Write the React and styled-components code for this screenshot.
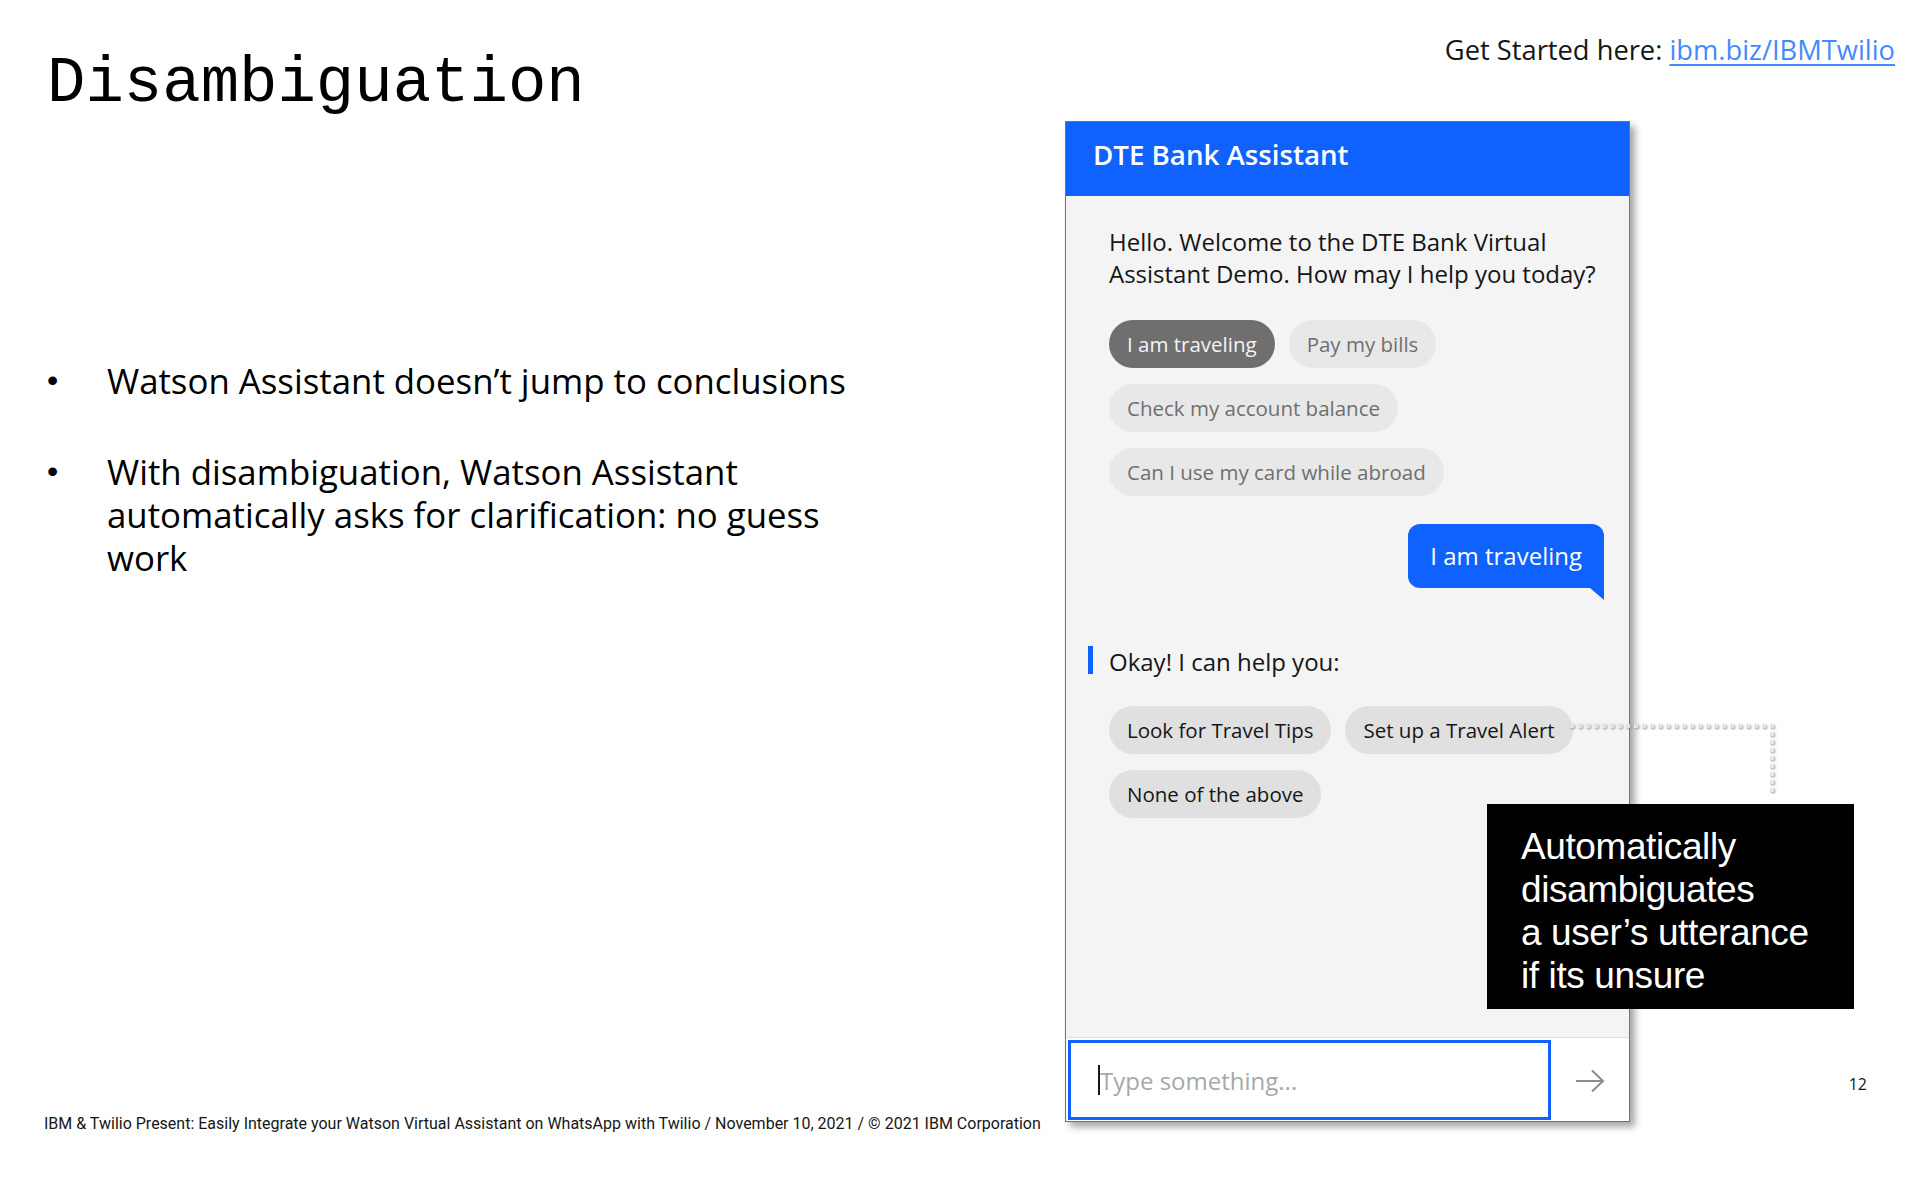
import React from 'react';
import styled, { createGlobalStyle } from 'styled-components';

const GlobalStyle = createGlobalStyle`
  html, body {
    margin: 0;
    padding: 0;
    background: #fff;
  }
  body {
    font-family: "Open Sans", "Noto Sans", sans-serif;
    color: #161616;
  }
`;

const Slide = styled.div`
  width: 1920px;
  height: 1200px;
  display: flex;
  overflow: hidden;
  background: #fff;
`;

const LeftColumn = styled.section`
  width: 1065px;
  flex: none;
  display: flex;
  flex-direction: column;
  box-sizing: border-box;
  padding: 52px 0 66px 0;
`;

const Title = styled.h1`
  margin: 0 0 0 47px;
  font-family: "Liberation Mono", "DejaVu Sans Mono", monospace;
  font-weight: 400;
  font-size: 64px;
  line-height: 64px;
  color: #000;
`;

const Bullets = styled.ul`
  list-style: none;
  margin: 243px 0 0 0;
  padding: 0 0 0 47px;
  display: flex;
  flex-direction: column;
  gap: 48px;
`;

const Bullet = styled.li`
  display: flex;
  font-size: 34.8px;
  line-height: 43px;
  color: #000;
  white-space: nowrap;
`;

const Dot = styled.span`
  width: 60px;
  flex: none;
  font-family: "Liberation Sans", Arial, sans-serif;
  font-size: 32px;
`;

const Footer = styled.footer`
  margin: auto 0 0 44px;
  font-family: Roboto, "Liberation Sans", sans-serif;
  font-size: 16px;
  line-height: 20px;
  color: #161616;
  white-space: nowrap;
`;

const RightColumn = styled.section`
  flex: 1;
  display: flex;
  flex-direction: column;
`;

const TopBar = styled.div`
  height: 121px;
  flex: none;
  box-sizing: border-box;
  padding: 32px 25px 0 0;
  text-align: right;
  font-size: 27.3px;
  line-height: 36px;
  color: #161616;
`;

const StartLink = styled.a`
  color: #4589ff;
  text-decoration: underline;
  text-underline-offset: 4px;
`;

const Stage = styled.div`
  flex: 1;
  position: relative;
  display: flex;
`;

const ChatPanel = styled.div`
  width: 565px;
  height: 1001px;
  flex: none;
  box-sizing: border-box;
  border: 1px solid #737373;
  box-shadow: 5px 5px 7px rgba(0, 0, 0, 0.35);
  background: #f4f4f4;
  display: flex;
  flex-direction: column;
`;

const PanelHeader = styled.div`
  height: 74px;
  flex: none;
  box-sizing: border-box;
  padding: 14px 27px 0;
  background: #0f62fe;
  color: #fff;
  font-size: 27.7px;
  font-weight: 600;
  line-height: 36px;
`;

const PanelBody = styled.div`
  flex: 1;
  min-height: 0;
  box-sizing: border-box;
  padding: 30px 25px 0 43px;
  display: flex;
  flex-direction: column;
  align-items: flex-start;
`;

const Message = styled.p`
  margin: 0;
  font-size: 24px;
  line-height: 32px;
  color: #161616;
`;

const ChipGroup = styled.div`
  margin-top: ${(p) => p.$top}px;
  display: flex;
  flex-direction: column;
  gap: 16px;
`;

const ChipRow = styled.div`
  display: flex;
  gap: 14px;
`;

const chipColors = {
  selected: { bg: '#6f6f6f', fg: '#f4f4f4' },
  disabled: { bg: '#e8e8e8', fg: '#6f6f6f' },
  active: { bg: '#e0e0e0', fg: '#161616' },
};

const Chip = styled.span`
  height: 48px;
  box-sizing: border-box;
  padding: 0 18px;
  border-radius: 24px;
  display: inline-flex;
  align-items: center;
  font-size: 20.5px;
  white-space: nowrap;
  background: ${(p) => chipColors[p.$variant].bg};
  color: ${(p) => chipColors[p.$variant].fg};
`;

const UserBubble = styled.div`
  align-self: flex-end;
  margin-top: 28px;
  position: relative;
  padding: 16px 22px;
  border-radius: 12px 12px 0 12px;
  background: #0f62fe;
  color: #fff;
  font-size: 24px;
  line-height: 32px;

  &::after {
    content: '';
    position: absolute;
    right: 0;
    top: 100%;
    border-left: 14px solid transparent;
    border-top: 12px solid #0f62fe;
  }
`;

const BotLine = styled.div`
  margin: 58px 0 0 -21px;
  display: flex;
  gap: 16px;
  font-size: 24px;
  line-height: 32px;
  color: #161616;
`;

const Accent = styled.span`
  width: 5px;
  height: 28px;
  flex: none;
  background: #0f62fe;
`;

const InputRow = styled.div`
  height: 84px;
  flex: none;
  box-sizing: border-box;
  border-top: 1px solid #e0e0e0;
  padding: 2px 0 0 2px;
  display: flex;
  background: #fff;
`;

const InputBox = styled.div`
  width: 483px;
  height: 80px;
  box-sizing: border-box;
  border: 3px solid #0f62fe;
  padding-left: 27px;
  display: flex;
  align-items: center;
  background: #fff;
  font-size: 24px;
  color: #a8a8a8;
`;

const Caret = styled.span`
  width: 2px;
  height: 30px;
  background: #161616;
`;

const SendButton = styled.div`
  flex: 1;
  display: flex;
  align-items: center;
  justify-content: center;
`;

const Aside = styled.div`
  flex: 1;
  display: flex;
  flex-direction: column;
  justify-content: flex-end;
  align-items: flex-end;
  padding: 0 53px 105px 0;
`;

const PageNumber = styled.span`
  font-size: 16px;
  line-height: 22px;
  color: #161616;
`;

const Callout = styled.div`
  position: absolute;
  left: 422px;
  top: 683px;
  width: 367px;
  height: 205px;
  box-sizing: border-box;
  padding: 21px 0 0 34px;
  background: #000;
  color: #fff;
  font-family: "Liberation Sans", Arial, sans-serif;
  font-size: 37px;
  line-height: 43px;
  letter-spacing: -0.4px;
`;

const Connector = styled.svg`
  position: absolute;
  left: 500px;
  top: 598px;
  width: 215px;
  height: 85px;
  overflow: visible;
`;

const firstOptions = [
  [
    { label: 'I am traveling', variant: 'selected' },
    { label: 'Pay my bills', variant: 'disabled' },
  ],
  [{ label: 'Check my account balance', variant: 'disabled' }],
  [{ label: 'Can I use my card while abroad', variant: 'disabled' }],
];

const secondOptions = [
  [
    { label: 'Look for Travel Tips', variant: 'active' },
    { label: 'Set up a Travel Alert', variant: 'active' },
  ],
  [{ label: 'None of the above', variant: 'active' }],
];

function Options({ rows, top }) {
  return (
    <ChipGroup $top={top}>
      {rows.map((row, i) => (
        <ChipRow key={i}>
          {row.map((o) => (
            <Chip key={o.label} $variant={o.variant}>
              {o.label}
            </Chip>
          ))}
        </ChipRow>
      ))}
    </ChipGroup>
  );
}

export default function App() {
  return (
    <>
      <GlobalStyle />
      <Slide>
        <LeftColumn>
          <Title>Disambiguation</Title>
          <Bullets>
            <Bullet>
              <Dot>•</Dot>
              <span>Watson Assistant doesn’t jump to conclusions</span>
            </Bullet>
            <Bullet>
              <Dot>•</Dot>
              <span>
                With disambiguation, Watson Assistant
                <br />
                automatically asks for clarification: no guess
                <br />
                work
              </span>
            </Bullet>
          </Bullets>
          <Footer>
            IBM &amp; Twilio Present: Easily Integrate your Watson Virtual Assistant on WhatsApp with
            Twilio / November 10, 2021 / © 2021 IBM Corporation
          </Footer>
        </LeftColumn>

        <RightColumn>
          <TopBar>
            Get Started here: <StartLink href="#">ibm.biz/IBMTwilio</StartLink>
          </TopBar>
          <Stage>
            <ChatPanel>
              <PanelHeader>DTE Bank Assistant</PanelHeader>
              <PanelBody>
                <Message>
                  Hello. Welcome to the DTE Bank Virtual
                  <br />
                  Assistant Demo. How may I help you today?
                </Message>
                <Options rows={firstOptions} top={30} />
                <UserBubble>I am traveling</UserBubble>
                <BotLine>
                  <Accent />
                  <span>Okay! I can help you:</span>
                </BotLine>
                <Options rows={secondOptions} top={28} />
              </PanelBody>
              <InputRow>
                <InputBox>
                  <Caret />
                  <span>Type something...</span>
                </InputBox>
                <SendButton>
                  <svg width="30" height="24" viewBox="0 0 30 24" fill="none" stroke="#8d8d8d" strokeWidth="2">
                    <path d="M1 12h27M17 1.5L28 12 17 22.5" />
                  </svg>
                </SendButton>
              </InputRow>
            </ChatPanel>
            <Aside>
              <PageNumber>12</PageNumber>
            </Aside>

            <Connector viewBox="0 0 215 85">
              <defs>
                <filter id="dotShadow" x="-10%" y="-40%" width="120%" height="180%">
                  <feDropShadow dx="1" dy="1" stdDeviation="1.2" floodColor="#8a8a8a" floodOpacity="0.9" />
                </filter>
              </defs>
              <polyline
                points="5,7 207,7 207,77"
                fill="none"
                stroke="#e4e4e4"
                strokeWidth="4"
                strokeDasharray="4 4"
                filter="url(#dotShadow)"
              />
            </Connector>

            <Callout>
              Automatically
              <br />
              disambiguates
              <br />
              a user’s utterance
              <br />
              if its unsure
            </Callout>
          </Stage>
        </RightColumn>
      </Slide>
    </>
  );
}
